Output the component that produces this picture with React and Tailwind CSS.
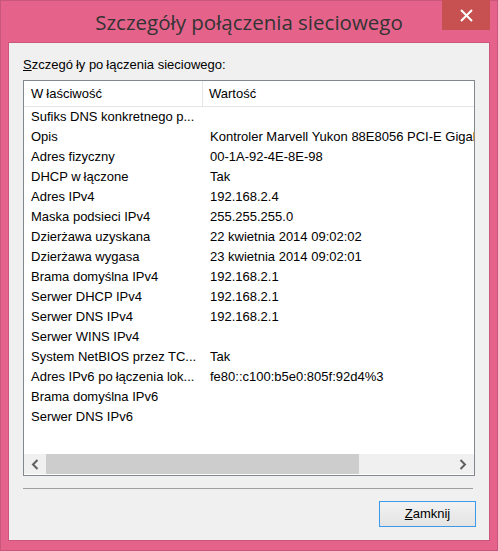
import React from 'react';

// Details dialog - Windows 8 style "Szczegóły połączenia sieciowego"
const ROWS = [
  ['Sufiks DNS konkretnego p...', ''],
  ['Opis', 'Kontroler Marvell Yukon 88E8056 PCI-E Gigabit Ethernet Controller'],
  ['Adres fizyczny', '00-1A-92-4E-8E-98'],
  ['DHCP włączone', 'Tak'],
  ['Adres IPv4', '192.168.2.4'],
  ['Maska podsieci IPv4', '255.255.255.0'],
  ['Dzierżawa uzyskana', '22 kwietnia 2014 09:02:02'],
  ['Dzierżawa wygasa', '23 kwietnia 2014 09:02:01'],
  ['Brama domyślna IPv4', '192.168.2.1'],
  ['Serwer DHCP IPv4', '192.168.2.1'],
  ['Serwer DNS IPv4', '192.168.2.1'],
  ['Serwer WINS IPv4', ''],
  ['System NetBIOS przez TC...', 'Tak'],
  ['Adres IPv6 połączenia lok...', 'fe80::c100:b5e0:805f:92d4%3'],
  ['Brama domyślna IPv6', ''],
  ['Serwer DNS IPv6', ''],
];

const Txt = ({ children }) => {
  const parts = children.split('ł');
  return (
    <>
      {parts.map((p, i) => (
        <React.Fragment key={i}>
          {i > 0 && <span className="ml-[3px]">ł</span>}
          {p}
        </React.Fragment>
      ))}
    </>
  );
};

const Chevron = ({ dir }) => (
  <svg width="8" height="11" viewBox="0 0 8 11">
    <path
      d={dir === 'left' ? 'M6.5 1 L2 5.5 L6.5 10' : 'M1.5 1 L6 5.5 L1.5 10'}
      fill="none"
      stroke="#606060"
      strokeWidth="2"
    />
  </svg>
);

export default function App() {
  return (
    <div
      className="w-[498px] h-[551px] bg-[#e5638b] border border-[#c9567c] flex flex-col text-black"
      style={{ fontFamily: '"Liberation Sans", Arial, sans-serif' }}
    >
      {/* Title bar */}
      <div className="relative h-[41px] shrink-0 flex items-center justify-center">
        <span
          className="text-[20.5px] text-[#333333] leading-none mt-[1px]"
          style={{ fontFamily: '"Open Sans", "Noto Sans", sans-serif' }}
        >
          Szczegóły połączenia sieciowego
        </span>
        <div className="absolute top-[-1px] right-[7px] w-[48px] h-[30px] bg-[#c75050] flex items-center justify-center">
          <svg width="13" height="13" viewBox="0 0 13 13">
            <path d="M1 1 L12 12 M12 1 L1 12" stroke="#ffffff" strokeWidth="2" />
          </svg>
        </div>
      </div>

      {/* Client area */}
      <div className="mx-[7px] h-[499px] bg-[#f0f0f0] border border-[#c9567c] flex flex-col px-[14px] pt-[14px] text-[13px]">
        <div className="leading-[16px] h-[16px]">
          <span className="underline">S</span>
          <Txt>zczegóły połączenia sieciowego:</Txt>
        </div>

        {/* List view */}
        <div className="mt-[7px] w-[452px] h-[396px] border border-[#828790] bg-white flex flex-col overflow-hidden">
          <div className="h-[26px] shrink-0 flex border-b border-[#e5e5e5]">
            <div className="w-[179px] pl-[7px] flex items-center border-r border-[#e5e5e5]">
              <Txt>Właściwość</Txt>
            </div>
            <div className="flex-1 pl-[6px] flex items-center">Wartość</div>
          </div>
          <div className="flex-1 flex flex-col">
            {ROWS.map(([k, v], i) => (
              <div key={i} className="h-[20px] flex items-center whitespace-nowrap">
                <div className="w-[180px] shrink-0 pl-[7px]">
                  <Txt>{k}</Txt>
                </div>
                <div className="pl-[6px]">{v}</div>
              </div>
            ))}
          </div>
          {/* Horizontal scrollbar */}
          <div className="h-[20px] mb-[1px] shrink-0 bg-[#f0f0f0] flex items-center">
            <div className="w-[22px] h-full flex items-center justify-center">
              <Chevron dir="left" />
            </div>
            <div className="w-[313px] h-full bg-[#cdcdcd]" />
            <div className="flex-1" />
            <div className="w-[22px] h-full flex items-center justify-center">
              <Chevron dir="right" />
            </div>
          </div>
        </div>

        <div className="mt-[12px] w-[450px] h-px bg-[#a0a0a0]" />

        <div className="mt-[12px] flex justify-end">
          <button className="w-[97px] h-[26px] border border-[#3c9ae8] bg-gradient-to-b from-[#f2f2f2] to-[#e4e4e4] text-[13px] mr-[-1px]">
            <span className="underline">Z</span>amknij
          </button>
        </div>
      </div>
    </div>
  );
}
